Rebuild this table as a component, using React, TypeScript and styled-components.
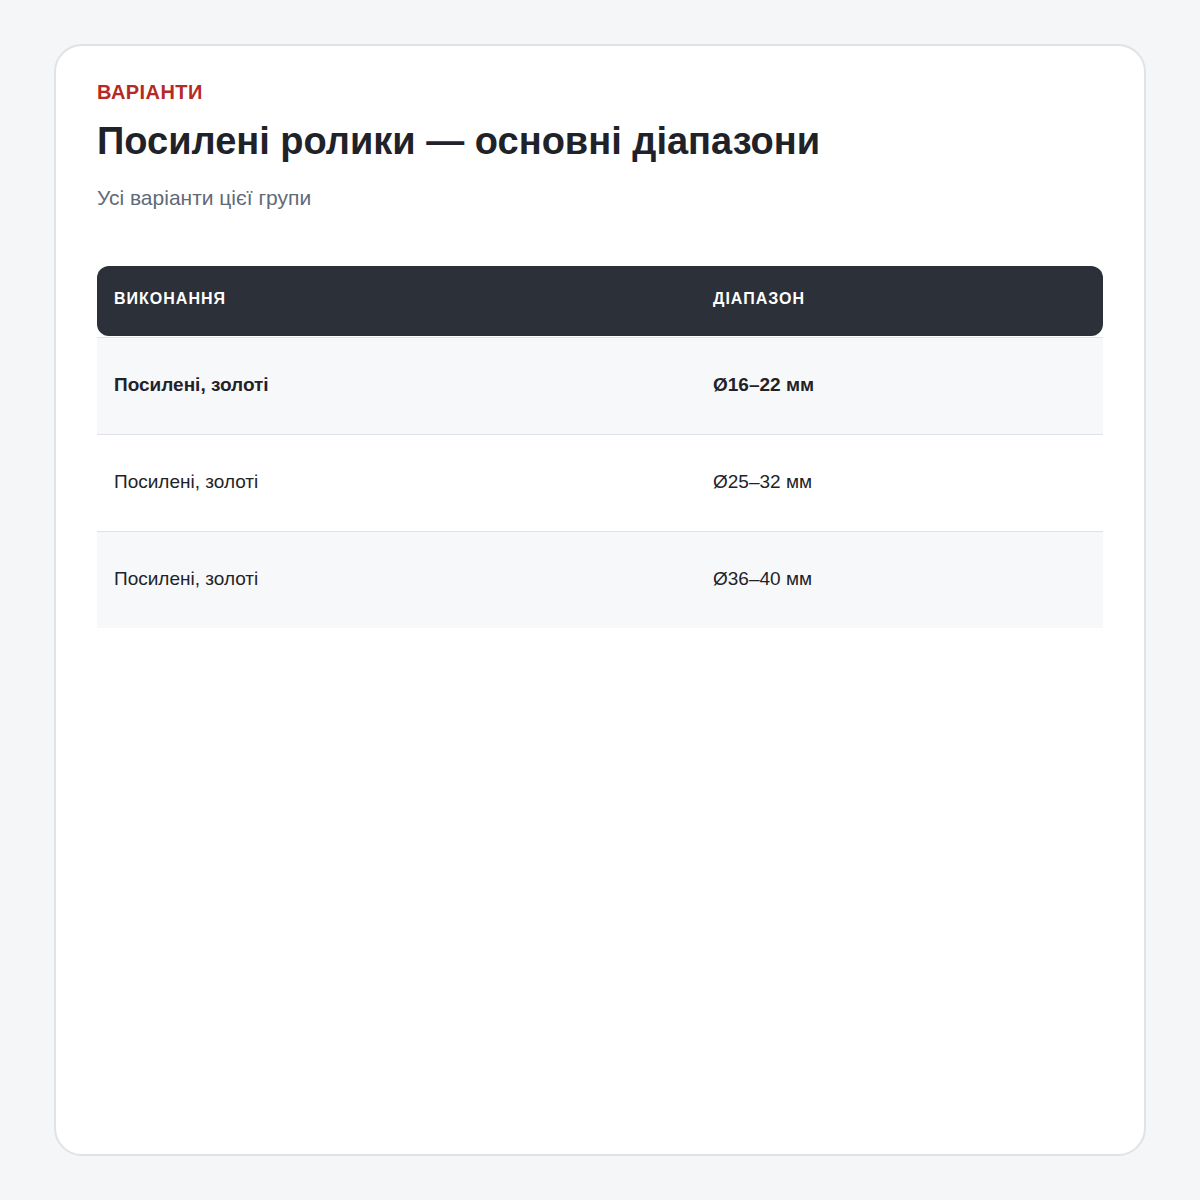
import React from "react";
import styled, { createGlobalStyle } from "styled-components";

interface Variant {
  name: string;
  range: string;
  featured?: boolean;
}

const Variants: Variant[] = [
  { name: "Посилені, золоті", range: "Ø16–22 мм", featured: true },
  { name: "Посилені, золоті", range: "Ø25–32 мм" },
  { name: "Посилені, золоті", range: "Ø36–40 мм" },
];

const GlobalStyle = createGlobalStyle`
  body {
    margin: 0;
    background: #f5f6f8;
    font-family: "Liberation Sans", Arial, sans-serif;
    color: #1f2329;
  }
`;

const Page = styled.div`
  padding: 44px 54px;
  height: 1200px;
  box-sizing: border-box;
`;

const Card = styled.section`
  box-sizing: border-box;
  height: 1112px;
  background: #ffffff;
  border: 2px solid #dfe2e8;
  border-radius: 28px;
  padding: 34px 41px;
`;

const Eyebrow = styled.div`
  color: #b52a26;
  font-size: 20px;
  font-weight: 700;
  letter-spacing: 0.45px;
  line-height: 24px;
  text-transform: uppercase;
`;

const Title = styled.h1`
  margin: 14px 0 0;
  font-size: 38px;
  line-height: 46px;
  font-weight: 700;
  color: #1f2329;
`;

const Subtitle = styled.p`
  margin: 21px 0 0;
  font-size: 21px;
  line-height: 26px;
  color: #5f6a78;
`;

const Table = styled.div`
  margin-top: 55px;
  display: grid;
  grid-template-columns: 599px 1fr;
`;

const HeadRow = styled.div`
  grid-column: 1 / -1;
  display: grid;
  grid-template-columns: subgrid;
  background: #2b3039;
  border-radius: 12px;
  height: 70px;
  margin-bottom: 1px;
  box-sizing: border-box;
  padding-bottom: 4px;
  align-items: center;
`;

const HeadCell = styled.div`
  padding: 0 17px;
  color: #ffffff;
  font-size: 16px;
  font-weight: 700;
  letter-spacing: 1px;
  text-transform: uppercase;
`;

const Row = styled.div<{ $striped: boolean }>`
  grid-column: 1 / -1;
  display: grid;
  grid-template-columns: subgrid;
  align-items: center;
  height: 97px;
  box-sizing: border-box;
  padding-bottom: 2px;
  border-top: 1px solid #dfe2e8;
  background: ${({ $striped }) => ($striped ? "#f7f8fa" : "#ffffff")};
`;

const Cell = styled.div<{ $bold?: boolean }>`
  padding: 0 17px;
  font-size: 19px;
  font-weight: ${({ $bold }) => ($bold ? 700 : 400)};
  color: #1f2329;
`;

const App: React.FC = () => {
  return (
    <Page>
      <GlobalStyle />
      <Card>
        <Eyebrow>Варіанти</Eyebrow>
        <Title>Посилені ролики — основні діапазони</Title>
        <Subtitle>Усі варіанти цієї групи</Subtitle>
        <Table>
          <HeadRow>
            <HeadCell>Виконання</HeadCell>
            <HeadCell>Діапазон</HeadCell>
          </HeadRow>
          {Variants.map((v, i) => (
            <Row key={v.range} $striped={i % 2 === 0}>
              <Cell $bold={v.featured}>{v.name}</Cell>
              <Cell $bold={v.featured}>{v.range}</Cell>
            </Row>
          ))}
        </Table>
      </Card>
    </Page>
  );
};

export default App;
